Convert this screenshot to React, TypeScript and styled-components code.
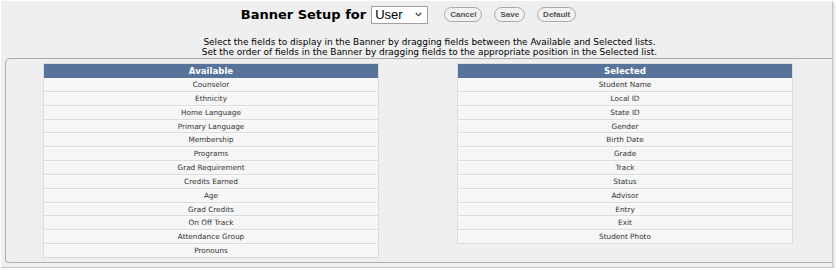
import styled, { createGlobalStyle } from "styled-components";

const GlobalStyle = createGlobalStyle`
    html, body {
        margin: 0;
        padding: 0;
        background: #ffffff;
    }
    body {
        font-family: "DejaVu Sans", Verdana, sans-serif;
    }
`;

const Frame = styled.div`
    box-sizing: border-box;
    width: 832px;
    height: 267px;
    margin: 1px 0 0 1px;
    background: #efefef;
    border-right: 1px solid #c4c4c4;
    border-bottom: 1px solid #c4c4c4;
    box-shadow: 2px 2px 2px rgba(0,0,0,0.12);
    display: flex;
    flex-direction: column;
`;

const TopBar = styled.div`
    display: flex;
    align-items: center;
    justify-content: center;
    padding: 4px 16px 0 0;
    height: 19px;
`;

const Title = styled.h1`
    margin: 0 5px 0 0;
    font-size: 13px;
    font-weight: 700;
    color: #000;
`;

const Picker = styled.div`
    box-sizing: border-box;
    width: 57px;
    height: 18px;
    background: #fff;
    border: 1px solid #a0a0a0;
    display: flex;
    align-items: center;
    justify-content: space-between;
    padding: 0 5px 0 3px;
    font-family: "Liberation Sans", Arial, sans-serif;
    font-size: 13px;
    color: #000;
    margin-right: 16px;
`;

const Chevron = styled.svg`
    width: 7px;
    height: 5px;
`;

const PillButton = styled.button`
    box-sizing: border-box;
    height: 15px;
    padding: 0 5px;
    margin-right: 12px;
    border: 1px solid #a8a8a8;
    border-radius: 8px;
    background: #f1f1f1;
    font-family: "Liberation Sans", Arial, sans-serif;
    font-size: 8px;
    font-weight: 700;
    color: #555;
    line-height: 13px;
    &:last-child {
        margin-right: 0;
    }
`;

const Instructions = styled.div`
    margin-top: 13px;
    padding-left: 26px;
    text-align: center;
    font-size: 8.95px;
    line-height: 10px;
    color: #000;
`;

const Panel = styled.div`
    flex: 1;
    margin: 1px 0 4px 4px;
    padding: 4px 39px 0 37px;
    border-top: 1px solid #a9a9a9;
    border-left: 1px solid #a8b4a4;
    border-bottom: 1px solid #a8b4a4;
    border-radius: 5px 0 0 4px;
    display: grid;
    grid-template-columns: 336px 336px;
    justify-content: space-between;
    align-items: start;
`;

const List = styled.div`
    display: flex;
    flex-direction: column;
`;

const ListHeader = styled.div`
    height: 14px;
    background: #577399;
    color: #fff;
    font-size: 8.6px;
    font-weight: 700;
    text-align: center;
    line-height: 15px;
    border: 1px solid #d8dde4;
    border-bottom: 0;
`;

const Item = styled.div`
    box-sizing: border-box;
    height: 13.85px;
    background: #f6f6f6;
    border: 1px solid #dcdcdc;
    border-top-color: #fbfbfb;
    color: #333;
    font-size: 7.3px;
    text-align: center;
    line-height: 12px;
`;

const available = [
    "Counselor",
    "Ethnicity",
    "Home Language",
    "Primary Language",
    "Membership",
    "Programs",
    "Grad Requirement",
    "Credits Earned",
    "Age",
    "Grad Credits",
    "On Off Track",
    "Attendance Group",
    "Pronouns",
];

const selected = [
    "Student Name",
    "Local ID",
    "State ID",
    "Gender",
    "Birth Date",
    "Grade",
    "Track",
    "Status",
    "Advisor",
    "Entry",
    "Exit",
    "Student Photo",
];

function FieldList({title, items}:{title:string; items:string[]}){
    return(
        <List>
            <ListHeader>{title}</ListHeader>
            {items.map((name)=><Item key={name}>{name}</Item>)}
        </List>
    )
}

export default function App(){
    return(
        <>
            <GlobalStyle/>
            <Frame>
                <TopBar>
                    <Title>Banner Setup for</Title>
                    <Picker>
                        User
                        <Chevron viewBox="0 0 7 5">
                            <path d="M0.8 1 L3.5 3.8 L6.2 1" fill="none" stroke="#333" strokeWidth="1.1"/>
                        </Chevron>
                    </Picker>
                    <PillButton>Cancel</PillButton>
                    <PillButton>Save</PillButton>
                    <PillButton>Default</PillButton>
                </TopBar>
                <Instructions>
                    Select the fields to display in the Banner by dragging fields between the Available and Selected lists.<br/>
                    Set the order of fields in the Banner by dragging fields to the appropriate position in the Selected list.
                </Instructions>
                <Panel>
                    <FieldList title="Available" items={available}/>
                    <FieldList title="Selected" items={selected}/>
                </Panel>
            </Frame>
        </>
    )
}
